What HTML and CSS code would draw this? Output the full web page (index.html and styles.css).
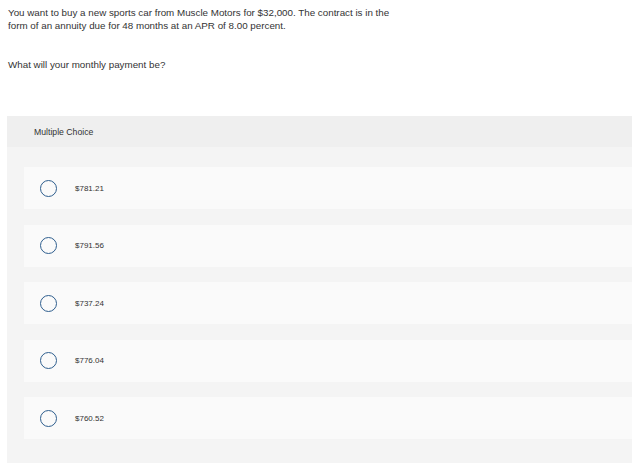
FILE: index.html
```html
<!DOCTYPE html>
<html>
<head>
<meta charset="utf-8">
<link rel="stylesheet" href="styles.css">
</head>
<body>
<div class="question">
  <p class="prompt">You want to buy a new sports car from Muscle Motors for $32,000. The contract is in the form of an annuity due for 48 months at an APR of 8.00 percent.</p>
  <p class="ask">What will your monthly payment be?</p>
</div>
<div class="mc">
  <div class="mc-header">Multiple Choice</div>
  <div class="options">
    <div class="option"><span class="radio"></span><span class="label">$781.21</span></div>
    <div class="option"><span class="radio"></span><span class="label">$791.56</span></div>
    <div class="option"><span class="radio"></span><span class="label">$737.24</span></div>
    <div class="option"><span class="radio"></span><span class="label">$776.04</span></div>
    <div class="option"><span class="radio"></span><span class="label">$760.52</span></div>
  </div>
</div>
</body>
</html>
```
FILE: styles.css
```css
html, body {
  margin: 0;
  padding: 0;
  background: #ffffff;
}
body {
  font-family: "Liberation Sans", Arial, sans-serif;
  color: #333333;
}
.question {
  padding: 6px 8px 0 8px;
  font-size: 9.8px;
  line-height: 13px;
}
.question p {
  margin: 0;
}
.prompt {
  width: 394px;
}
.ask {
  margin-top: 26px !important;
}
.mc {
  margin: 45px 0 0 7px;
}
.mc-header {
  height: 31px;
  background: #efefef;
  display: flex;
  align-items: center;
  padding-left: 27px;
  font-size: 8.7px;
}
.options {
  background: #f4f4f4;
  padding: 20px 0 24px 17px;
  display: flex;
  flex-direction: column;
  gap: 15.5px;
}
.option {
  height: 42px;
  background: #fafafa;
  display: flex;
  align-items: center;
  padding-left: 16px;
}
.radio {
  width: 15px;
  height: 15px;
  border: 1.5px solid #2e5e8e;
  border-radius: 50%;
  flex: none;
}
.label {
  margin-left: 18px;
  font-size: 8px;
}
```
